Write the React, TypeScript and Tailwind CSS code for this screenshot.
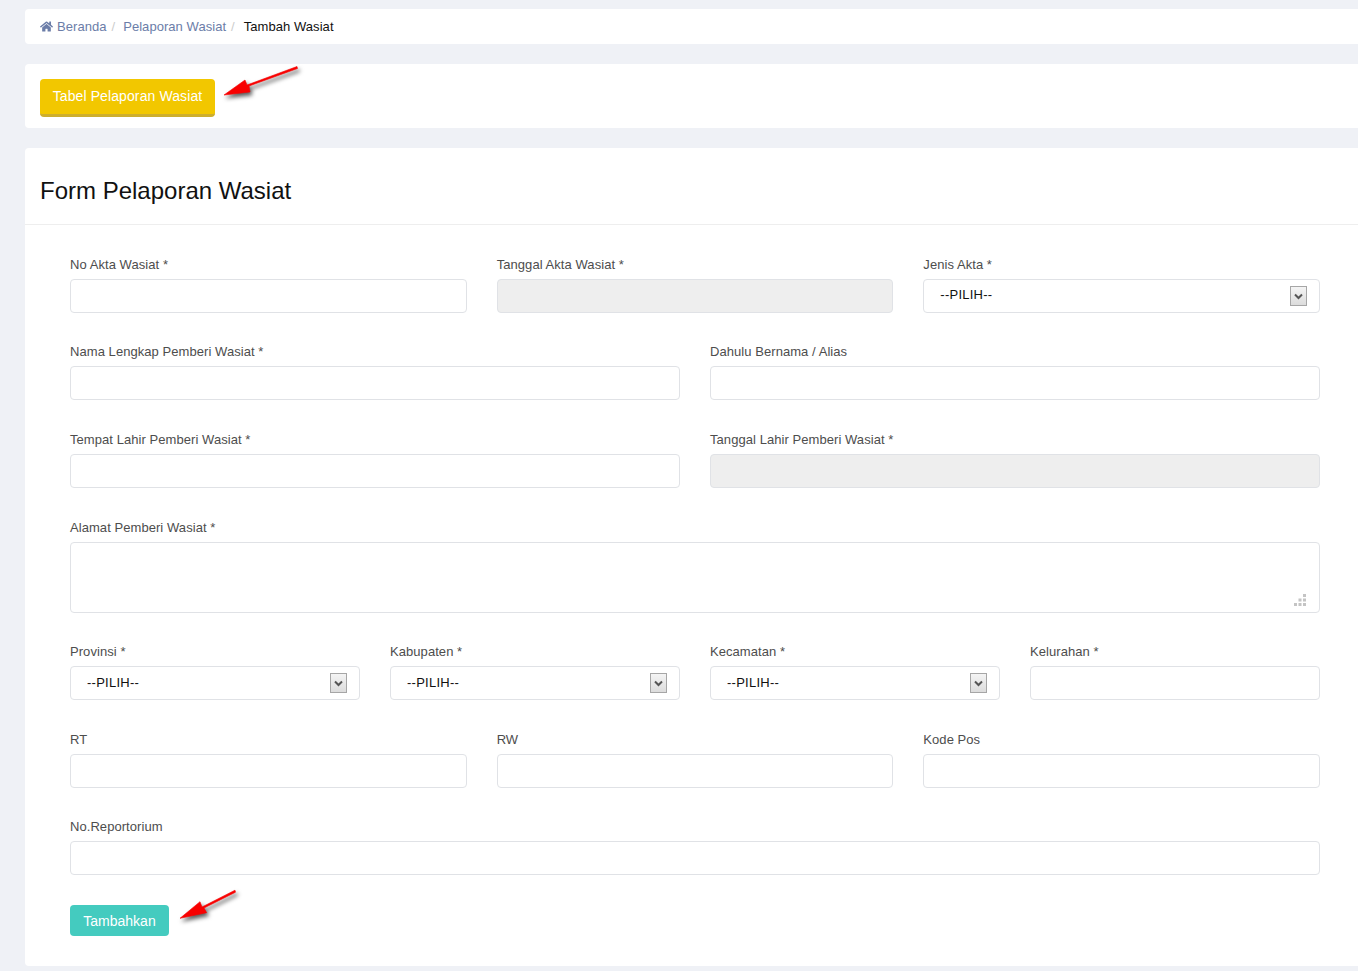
import React from "react";
import { FaHome } from "react-icons/fa";

const boxCls = "block w-full h-[34px] rounded-[4px] border border-[#e0e2e6] outline-none";

const Field = ({ label, children }: { label: string; children: React.ReactNode }) => (
  <div>
    <label className="mb-[5px] block h-[20px] pt-[1px] text-[13px] leading-[20px] tracking-[0.06px] text-[#4d4d4d]">{label}</label>
    {children}
  </div>
);

const Input = ({ disabled }: { disabled?: boolean }) => (
  <input
    type="text"
    disabled={disabled}
    className={`${boxCls} px-3 text-[14px] text-[#555] ${disabled ? "bg-[#eeeeee]" : "bg-white"}`}
  />
);

const Select = ({ raised }: { raised?: boolean }) => (
  <div className="relative">
    <select
      className={`${boxCls} appearance-none bg-white pl-4 text-[13px] tracking-[0.25px] text-[#111] ${raised ? "pb-[2px]" : ""}`}
      defaultValue=""
    >
      <option value="">--PILIH--</option>
    </select>
    <span className="pointer-events-none absolute right-[13px] top-[7px] flex h-[20px] w-[17px] items-center justify-center border border-[#a6a6a6] bg-gradient-to-b from-[#f4f4f4] to-[#dcdcdc]">
      <svg width="9" height="7" viewBox="0 0 9 7">
        <path d="M1 1.5 L4.5 5 L8 1.5" fill="none" stroke="#555" strokeWidth="2" />
      </svg>
    </span>
  </div>
);

const Arrow = ({ className, points }: { className: string; points: string }) => (
  <svg className={`absolute overflow-visible drop-shadow-[2px_3px_2px_rgba(0,0,0,0.65)] ${className}`}>
    <polygon points={points} fill="#f80000" stroke="#f80000" strokeWidth="0.6" strokeLinejoin="round" />
  </svg>
);

export default function App() {
  return (
    <div className="min-h-[971px] bg-[#eff1f6] pl-[25px] pt-[9px] font-['Liberation_Sans',Arial,sans-serif]">
      {/* breadcrumb */}
      <div className="flex h-[35px] items-center rounded-l-[4px] bg-white pl-[15px] text-[13px] tracking-[0.05px] text-[#6b7da8]">
        <FaHome className="mr-[4px] text-[13px]" />
        <span>Beranda</span>
        <span className="ml-[5px] mr-[8px] text-[#ccc]">/</span>
        <span>Pelaporan Wasiat</span>
        <span className="ml-[5px] mr-[9px] text-[#ccc]">/</span>
        <span className="text-[#111]">Tambah Wasiat</span>
      </div>

      {/* top action */}
      <div className="relative mt-[20px] h-[64px] rounded-l-[4px] bg-white pl-[15px] pt-[15px]">
        <button className="h-[38px] w-[175px] rounded-[4px] border-b-[3px] border-[#cdae2d] bg-[#f2c700] text-[14px] tracking-[0.1px] text-white">
          Tabel Pelaporan Wasiat
        </button>
        <Arrow
          className="left-[195px] top-0 h-[36px] w-[80px]"
          points="4,31 25,16 27,21 77,2.5 77.5,4.5 29,22 30,28"
        />
      </div>

      {/* form */}
      <div className="mt-[20px] h-[818px] rounded-l-[4px] bg-white">
        <div className="flex h-[77px] items-center border-b border-[#eeeeee] pl-[15px] pt-[9px] text-[24px] text-[#111]">
          Form Pelaporan Wasiat
        </div>
        <div className="pl-[45px] pr-[38px] pt-[29px]">
          <div className="mb-[28px] grid grid-cols-3 gap-x-[30px]">
            <Field label="No Akta Wasiat *"><Input /></Field>
            <Field label="Tanggal Akta Wasiat *"><Input disabled /></Field>
            <Field label="Jenis Akta *"><Select raised /></Field>
          </div>
          <div className="mb-[29px] grid grid-cols-2 gap-x-[30px]">
            <Field label="Nama Lengkap Pemberi Wasiat *"><Input /></Field>
            <Field label="Dahulu Bernama / Alias"><Input /></Field>
          </div>
          <div className="mb-[29px] grid grid-cols-2 gap-x-[30px]">
            <Field label="Tempat Lahir Pemberi Wasiat *"><Input /></Field>
            <Field label="Tanggal Lahir Pemberi Wasiat *"><Input disabled /></Field>
          </div>
          <div className="mb-[28px]">
            <Field label="Alamat Pemberi Wasiat *">
              <div className="relative">
                <textarea className="block h-[71px] w-full resize-none rounded-[4px] border border-[#e0e2e6] bg-white outline-none" />
                <svg className="absolute bottom-[7px] right-[14px]" width="12" height="12" viewBox="0 0 12 12" fill="#c4c4c4">
                  <rect x="9" y="0" width="3" height="3" />
                  <rect x="4.5" y="4.5" width="3" height="3" />
                  <rect x="9" y="4.5" width="3" height="3" />
                  <rect x="0" y="9" width="3" height="3" />
                  <rect x="4.5" y="9" width="3" height="3" />
                  <rect x="9" y="9" width="3" height="3" />
                </svg>
              </div>
            </Field>
          </div>
          <div className="mb-[29px] grid grid-cols-4 gap-x-[30px]">
            <Field label="Provinsi *"><Select /></Field>
            <Field label="Kabupaten *"><Select /></Field>
            <Field label="Kecamatan *"><Select /></Field>
            <Field label="Kelurahan *"><Input /></Field>
          </div>
          <div className="mb-[28px] grid grid-cols-3 gap-x-[30px]">
            <Field label="RT"><Input /></Field>
            <Field label="RW"><Input /></Field>
            <Field label="Kode Pos"><Input /></Field>
          </div>
          <Field label="No.Reportorium"><Input /></Field>
          <div className="relative mt-[30px]">
            <button className="h-[31px] w-[99px] rounded-[4px] bg-[#44cbbf] pt-[2px] text-[14px] text-white">Tambahkan</button>
            <Arrow
              className="left-[107px] top-[-18px] h-[36px] w-[62px]"
              points="3,31.3 23,14.7 25,20 58,3.2 58.5,5.2 27,21 29.7,25.7"
            />
          </div>
        </div>
      </div>
    </div>
  );
}
